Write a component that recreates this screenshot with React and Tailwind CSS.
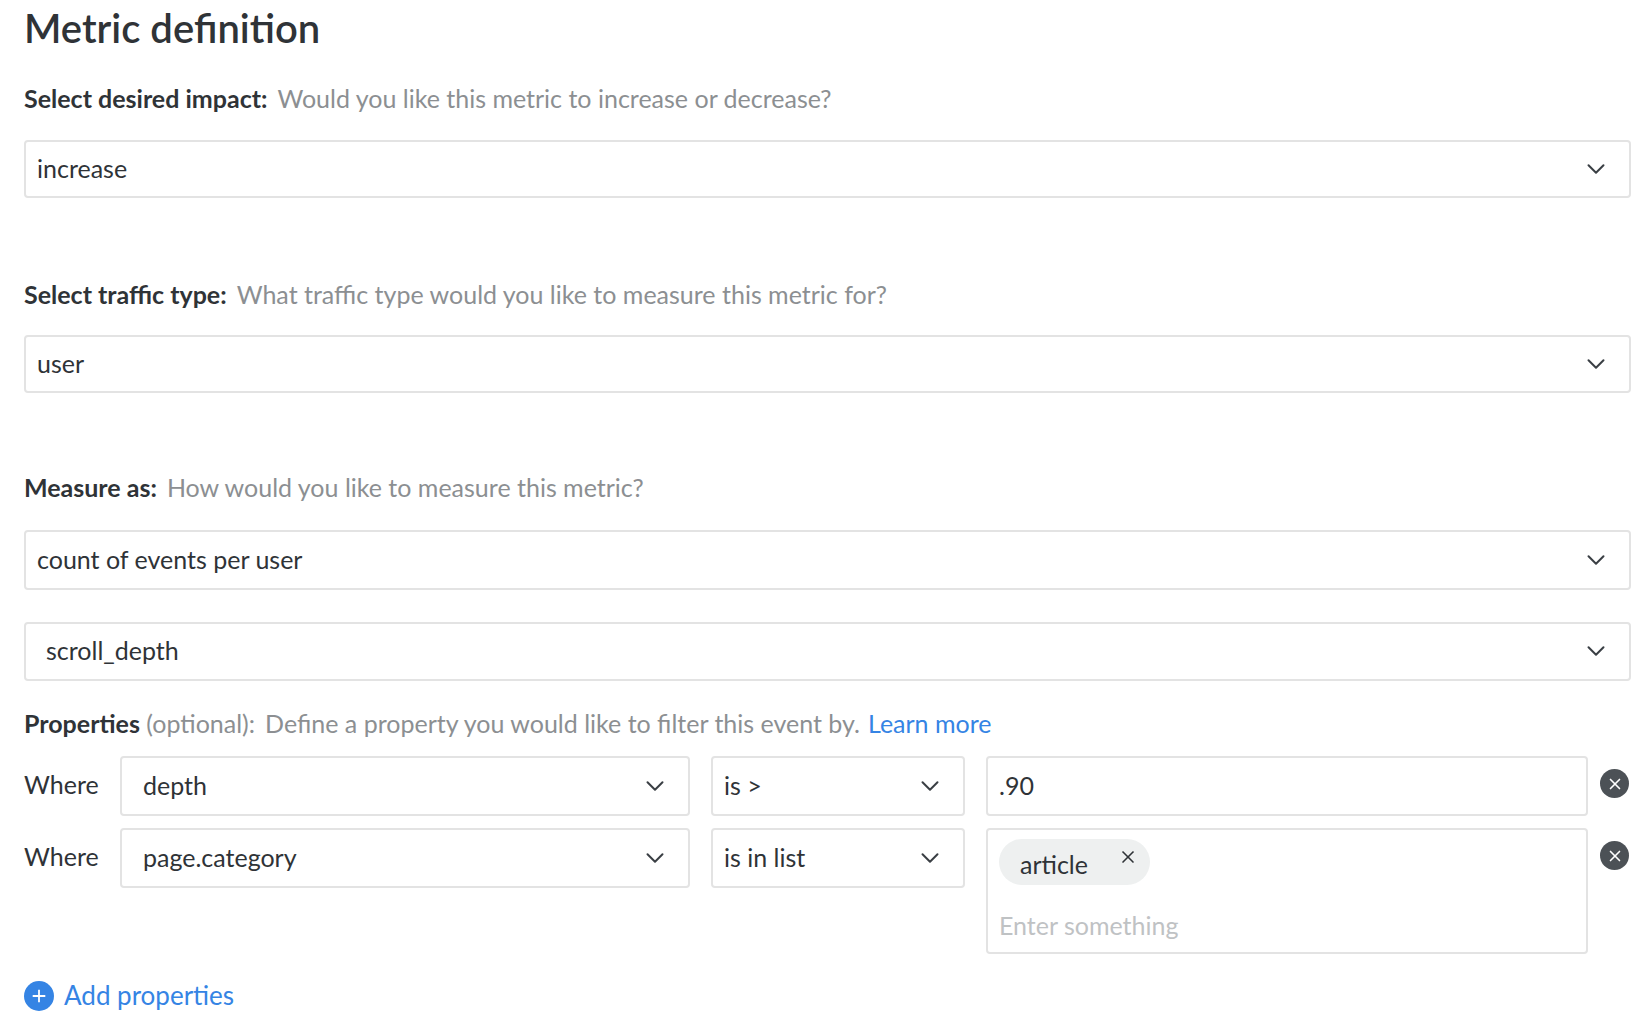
import { FiChevronDown, FiX } from "react-icons/fi";

const font = { fontFamily: "Lato, 'Open Sans', sans-serif" };

function Select({ value, className = "", pl = "pl-[11px]" }) {
  return (
    <div className={`flex items-center justify-between border-2 border-[#e3e3e3] rounded-[4px] bg-white ${pl} pr-[18px] ${className}`}>
      <span className="text-[25px] text-[#2f3337]">{value}</span>
      <FiChevronDown className="w-[30px] h-[30px] text-[#3a3f44]" strokeWidth={1.6} />
    </div>
  );
}

function Label({ bold, hint, className = "" }) {
  return (
    <div className={`text-[25px] ${className}`}>
      <span className="font-bold text-[#2f3337]">{bold}</span>
      <span className="text-[#8c8f92] ml-[10px]">{hint}</span>
    </div>
  );
}

function Clear() {
  return (
    <div className="w-[29px] h-[29px] rounded-full bg-[#4c5156] flex items-center justify-center mt-[13px] ml-[12px]">
      <FiX className="w-[18px] h-[18px] text-white" strokeWidth={2.2} />
    </div>
  );
}

export default function App() {
  return (
    <div className="w-[1652px] h-[1034px] bg-white pl-[24px] pr-[21px] pt-[4px]" style={font}>
      <h1 className="text-[40px] font-semibold text-[#2f3337] leading-[48px]">Metric definition</h1>

      <Label className="mt-[28px]" bold="Select desired impact:" hint="Would you like this metric to increase or decrease?" />
      <Select className="mt-[22px] h-[58px]" value="increase" />

      <Label className="mt-[78px]" bold="Select traffic type:" hint="What traffic type would you like to measure this metric for?" />
      <Select className="mt-[22px] h-[58px]" value="user" />

      <Label className="mt-[76px]" bold="Measure as:" hint="How would you like to measure this metric?" />
      <Select className="mt-[23px] h-[60px]" value="count of events per user" />
      <Select className="mt-[32px] h-[59px]" pl="pl-[20px]" value="scroll_depth" />

      <div className="mt-[24px] text-[25px]">
        <span className="font-bold text-[#2f3337]">Properties</span>
        <span className="text-[#8c8f92]"> (optional):</span>
        <span className="text-[#8c8f92] ml-[10px]">Define a property you would like to filter this event by.</span>
        <span className="text-[#3584e4] ml-[8px]">Learn more</span>
      </div>

      <div className="mt-[14px] flex items-start">
        <div className="w-[96px] text-[25px] text-[#2f3337] pt-[10px]">Where</div>
        <Select className="w-[570px] h-[60px]" pl="pl-[21px]" value="depth" />
        <Select className="w-[254px] h-[60px] ml-[21px]" value="is >" />
        <div className="w-[602px] h-[60px] ml-[21px] border-2 border-[#e3e3e3] rounded-[4px] flex items-center pl-[11px] text-[25px] text-[#2f3337]">.90</div>
        <Clear />
      </div>

      <div className="mt-[12px] flex items-start">
        <div className="w-[96px] text-[25px] text-[#2f3337] pt-[10px]">Where</div>
        <Select className="w-[570px] h-[60px]" pl="pl-[21px]" value="page.category" />
        <Select className="w-[254px] h-[60px] ml-[21px]" value="is in list" />
        <div className="w-[602px] h-[126px] ml-[21px] border-2 border-[#e3e3e3] rounded-[4px] pl-[11px] pt-[9px]">
          <div className="inline-flex items-start h-[46px] rounded-full bg-[#eef0f0] pl-[21px] pr-[12px]">
            <span className="text-[25px] text-[#2f3337] mt-[7px]">article</span>
            <FiX className="w-[20px] h-[20px] text-[#2f3337] ml-[30px] mt-[8px]" strokeWidth={2} />
          </div>
          <div className="text-[25px] text-[#bfc2c4] mt-[22px]">Enter something</div>
        </div>
        <Clear />
      </div>

      <div className="mt-[22px] flex items-center gap-[10px]">
        <div className="w-[30px] h-[30px] rounded-full bg-[#3584e4] flex items-center justify-center">
          <svg viewBox="0 0 20 20" className="w-[18px] h-[18px]"><path d="M10 3v14M3 10h14" stroke="white" strokeWidth="2" /></svg>
        </div>
        <span className="text-[26px] text-[#3584e4]">Add properties</span>
      </div>
    </div>
  );
}
